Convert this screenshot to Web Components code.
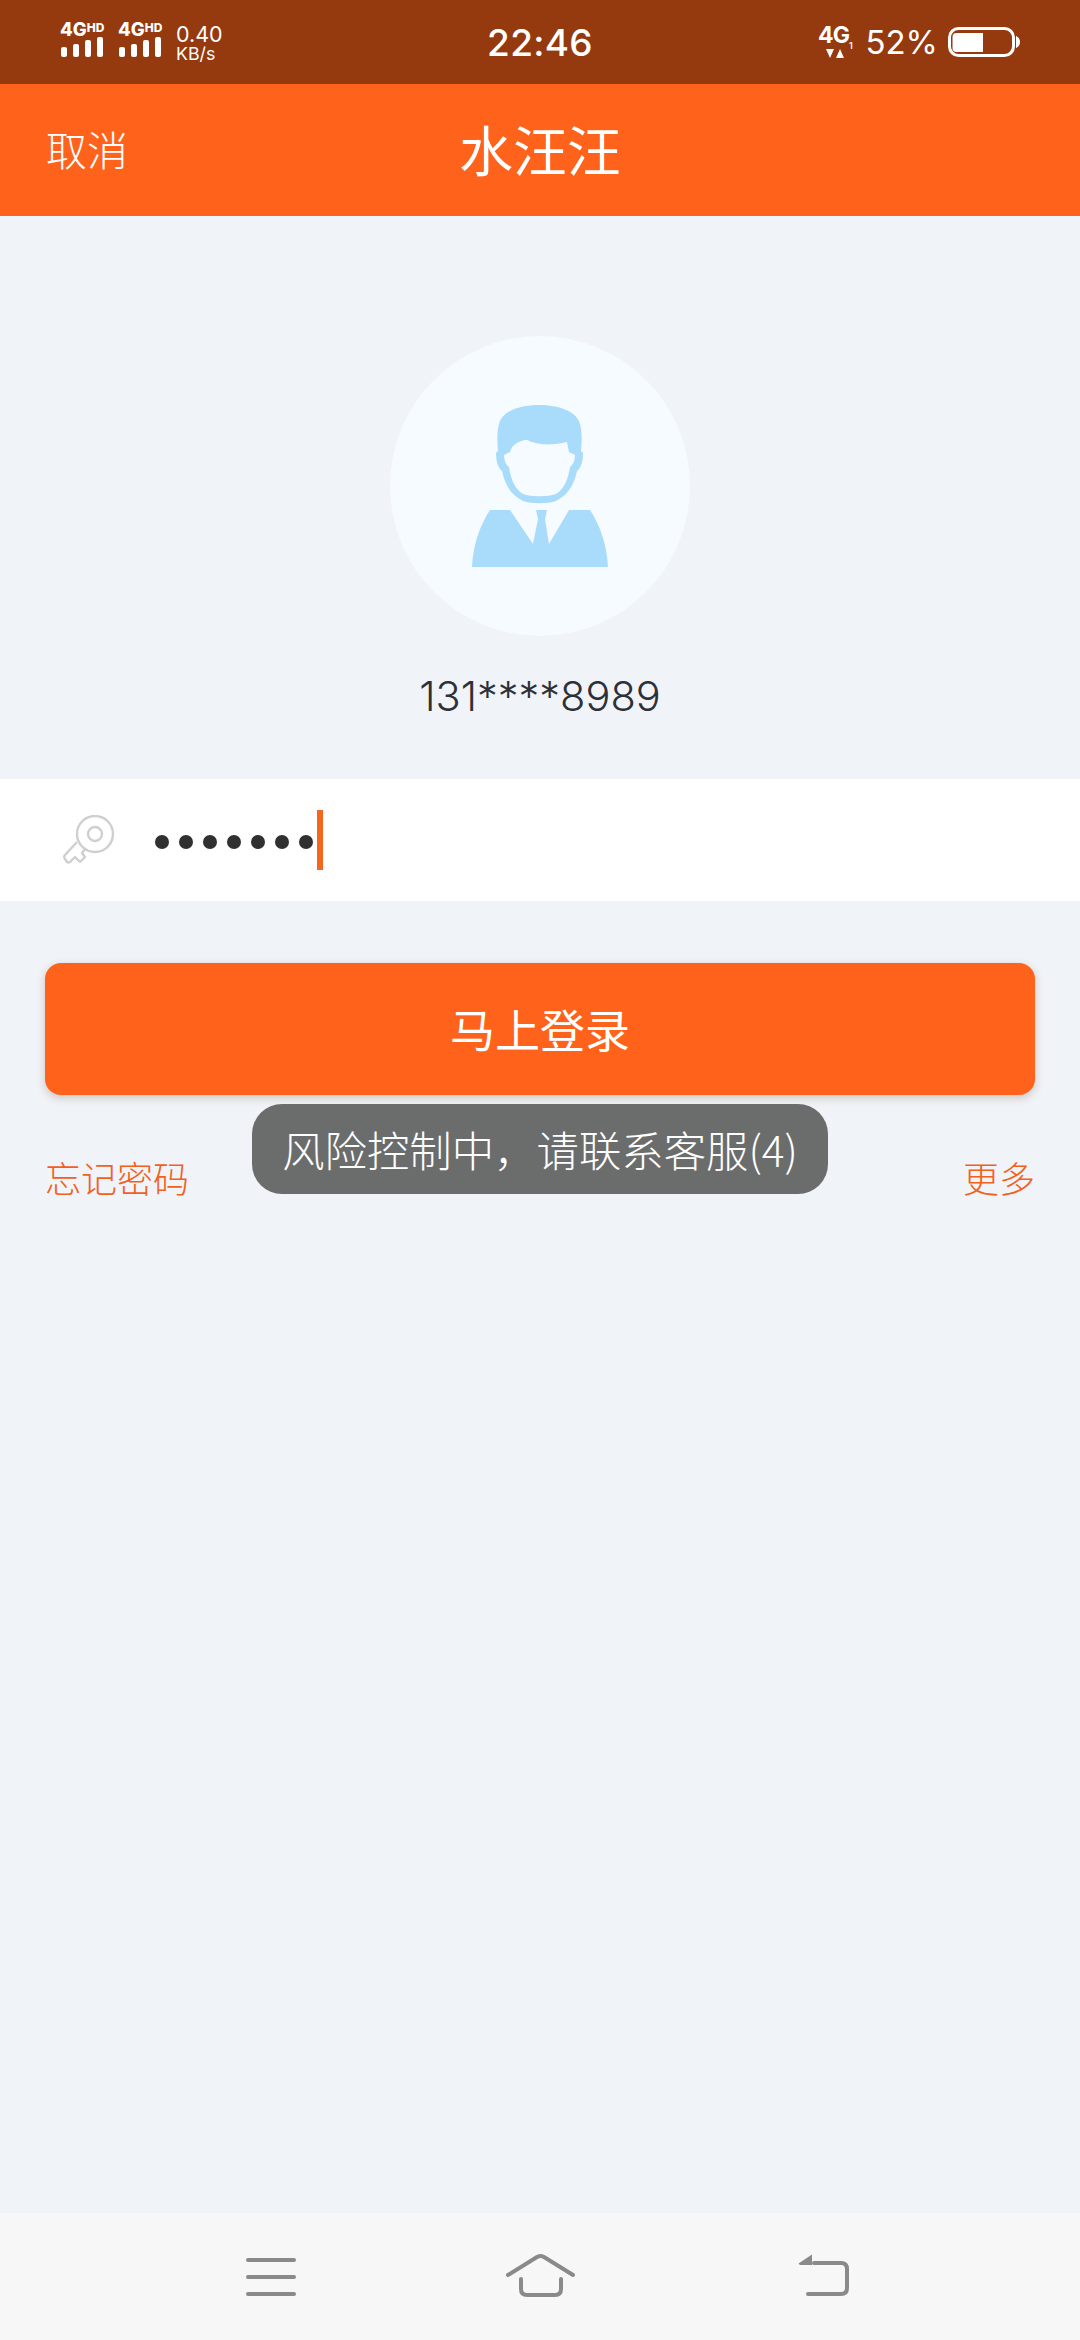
<!DOCTYPE html>
<html lang="zh">
<head>
<meta charset="utf-8">
<title>水汪汪</title>
<style>
    html, body{
        margin: 0;
        height: 2340px;
        overflow: hidden;
    }
    body{
        display: flex;
        flex-direction: column;
        position: relative;
        background: #f0f3f7;
        font-family: "Inter", "Noto Sans CJK SC", sans-serif;
    }
</style>
</head>
<body>
<status-bar></status-bar>
<app-bar heading="水汪汪" action="取消"></app-bar>
<user-avatar phone="131****8989"></user-avatar>
<password-field count="7"></password-field>
<login-button>马上登录</login-button>
<login-links left="忘记密码" right="更多"></login-links>
<toast-message>风险控制中，请联系客服(4)</toast-message>
<nav-bar></nav-bar>

<script>
class StatusBar extends HTMLElement{
    constructor(){
        super();
        this.shadow = this.attachShadow({mode: 'open'});
    }
    connectedCallback() {
        this.render();
    }
    signal(){
        return `
        <div class="signal">
            <div class="net"><b>4G</b><i>HD</i></div>
            <div class="bars"><span style="height:10px"></span><span style="height:13px"></span><span style="height:17px"></span><span style="height:20px"></span></div>
        </div>`;
    }
    render(){
        this.shadow.innerHTML =
        `
        <style>
            :host{
                display: block;
                height: 84px;
                background: #95390e;
                color: #fff;
                font-family: "Inter", sans-serif;
            }
            .row{
                display: grid;
                grid-template-columns: 1fr auto 1fr;
                align-items: center;
                height: 84px;
                padding: 0 60px;
            }
            .left, .right{
                display: flex;
                align-items: center;
            }
            .right{
                justify-content: flex-end;
            }
            .signal{
                width: 46px;
                margin-right: 12px;
                margin-top: -6px;
            }
            .net{
                display: flex;
                height: 16px;
                line-height: 16px;
                white-space: nowrap;
            }
            .net b{
                font-size: 18.5px;
                font-weight: 800;
                letter-spacing: 0;
            }
            .net i{
                font-size: 12px;
                font-weight: 800;
                font-style: normal;
                line-height: 11px;
                margin-top: 1px;
            }
            .bars{
                display: flex;
                align-items: flex-end;
                gap: 6px;
                height: 20px;
                margin-left: 1px;
            }
            .bars span{
                width: 6px;
                background: #fff;
                border-radius: 2px;
            }
            .speed{
                font-size: 21.5px;
                line-height: 22px;
                margin-top: 1px;
            }
            .speed small{
                display: block;
                font-size: 17.8px;
                line-height: 18px;
            }
            .time{
                font-size: 37px;
                font-weight: 450;
                letter-spacing: 0.3px;
            }
            .sim{
                display: flex;
                flex-direction: column;
                align-items: center;
                width: 36px;
                margin-right: 12px;
                margin-top: -2px;
            }
            .sim div{
                font-size: 23px;
                font-weight: 700;
                line-height: 22px;
                letter-spacing: -1px;
                white-space: nowrap;
            }
            .sim sub{
                font-size: 9px;
                font-weight: 600;
                line-height: 0;
                letter-spacing: 0;
            }
            .sim svg{
                display: block;
                margin-top: 3px;
            }
            .pct{
                font-size: 33px;
                margin-right: 10px;
            }
            .battery{
                display: block;
            }
        </style>
        <div class="row">
            <div class="left">
                ${this.signal()}
                ${this.signal()}
                <div class="speed">0.40<small>KB/s</small></div>
            </div>
            <div class="time">22:46</div>
            <div class="right">
                <div class="sim"><div>4G<sub>1</sub></div>
                    <svg width="18" height="9" viewBox="0 0 18 9"><path d="M0 0h8L4 9zM10 9h8l-4-9z" fill="#fff"/></svg>
                </div>
                <div class="pct">52%</div>
                <svg class="battery" width="72" height="30" viewBox="0 0 72 30">
                    <rect x="1.500" y="1.500" width="64" height="27" rx="9" fill="none" stroke="#fff" stroke-width="3"/>
                    <path d="M4.500 10a4 4 0 0 1 4-4H35V25H8.500a4 4 0 0 1-4-4z" fill="#fff"/>
                    <path d="M68 9c2.500 1 4 3 4 6s-1.500 5-4 6z" fill="#fff"/>
                </svg>
            </div>
        </div>
        `;
    }
}
customElements.define('status-bar', StatusBar);

class AppBar extends HTMLElement{
    constructor(){
        super();
        this.shadow = this.attachShadow({mode: 'open'});
    }
    connectedCallback() {
        this.render();
    }
    render(){
        this.shadow.innerHTML =
        `
        <style>
            :host{
                display: block;
                background: #ff631b;
                color: #fff;
                font-family: "Noto Sans CJK SC", sans-serif;
            }
            .bar{
                display: grid;
                grid-template-columns: 1fr auto 1fr;
                align-items: center;
                box-sizing: border-box;
                height: 132px;
                padding: 0 46px 4px;
            }
            .action{
                font-size: 41px;
                font-weight: 300;
            }
            h1{
                margin: 0;
                font-size: 54px;
                font-weight: 400;
            }
        </style>
        <div class="bar">
            <div class="action">${this.getAttribute('action')}</div>
            <h1>${this.getAttribute('heading')}</h1>
        </div>
        `;
    }
}
customElements.define('app-bar', AppBar);

class UserAvatar extends HTMLElement{
    constructor(){
        super();
        this.shadow = this.attachShadow({mode: 'open'});
    }
    connectedCallback() {
        this.render();
    }
    render(){
        this.shadow.innerHTML =
        `
        <style>
            :host{
                display: flex;
                flex-direction: column;
                align-items: center;
                padding-top: 120px;
                height: 563px;
                box-sizing: border-box;
            }
            .circle{
                display: flex;
                flex: none;
                align-items: center;
                justify-content: center;
                width: 300px;
                height: 300px;
                border-radius: 50%;
                background: #f6fbff;
            }
            svg{
                display: block;
            }
            .phone{
                margin-top: 36px;
                font-family: "Inter", sans-serif;
                font-size: 41.500px;
                font-weight: 300;
                line-height: 48px;
                color: #2e3038;
            }
        </style>
        <div class="circle">
            <svg width="136" height="162" viewBox="0 0 136 162">
                <path fill="#a9dcfa" d="M26 46C25 36 25 26 27 19C30 6 48 0 67 0C86 0 105 6 108 19C110 26 110 36 109 46L111 48C111 56 109 63 105 66C102 80 96 90 84 96C76 99 59 99 51 96C39 90 33 80 30 66C26 63 24 56 24 48Z"/>
                <path fill="#f6fbff" d="M40 42C45 37 50 35 55 35C65 40 80 41 95 37L97 47L103 50C103 55 101 60 98 62C96 75 92 84 84 89C76 92 59 92 51 89C43 84 39 75 37 62C34 60 32 55 32 50L38 47Z"/>
                <path fill="#a9dcfa" d="M0 162C1 140 8 120 18 105H38L61 139L66 114L64 105H75L73 114L77 139L97 105H118C128 120 135 140 136 162Z"/>
            </svg>
        </div>
        <div class="phone">${this.getAttribute('phone')}</div>
        `;
    }
}
customElements.define('user-avatar', UserAvatar);

class PasswordField extends HTMLElement{
    constructor(){
        super();
        this.shadow = this.attachShadow({mode: 'open'});
    }
    connectedCallback() {
        this.render();
    }
    render(){
        let dots = '';
        for(let i = 0; i < Number(this.getAttribute('count')); i++){
            dots += '<span></span>';
        }
        this.shadow.innerHTML =
        `
        <style>
            :host{
                display: flex;
                align-items: center;
                height: 122px;
                padding-left: 63px;
                background: #fff;
            }
            svg{
                display: block;
                width: 52px;
                height: 50px;
                margin-right: 40px;
            }
            .dots{
                display: flex;
                gap: 10px;
                margin-top: 4px;
            }
            .dots span{
                width: 14px;
                height: 14px;
                border-radius: 50%;
                background: #303030;
            }
            .caret{
                width: 6px;
                height: 60px;
                margin-left: 4px;
                background: #f4671f;
            }
        </style>
        <svg viewBox="0 0 52 50" fill="none" stroke="#cfcfcf" stroke-width="2.400" stroke-linejoin="round">
            <circle cx="32" cy="19" r="18"/>
            <circle cx="32" cy="19" r="7"/>
            <path d="M14 27L2 40Q0.500 42 2 44L4 47Q5 48 7 47L12 42L16 46Q17 47 18 46L22 42L19 38L23 33"/>
        </svg>
        <div class="dots">${dots}</div>
        <div class="caret"></div>
        `;
    }
}
customElements.define('password-field', PasswordField);

class LoginButton extends HTMLElement{
    constructor(){
        super();
        this.shadow = this.attachShadow({mode: 'open'});
    }
    connectedCallback() {
        this.render();
    }
    render(){
        this.shadow.innerHTML =
        `
        <style>
            :host{
                display: block;
                margin: 62px 45px 0;
            }
            button{
                display: block;
                width: 100%;
                height: 132px;
                padding: 0 0 2px;
                border: 0;
                border-radius: 16px;
                background: #ff631b;
                box-shadow: 0 3px 8px rgba(120, 80, 60, 0.28);
                color: #fff;
                font-family: "Noto Sans CJK SC", sans-serif;
                font-size: 45px;
                font-weight: 400;
            }
        </style>
        <button><slot></slot></button>
        `;
    }
}
customElements.define('login-button', LoginButton);

class LoginLinks extends HTMLElement{
    constructor(){
        super();
        this.shadow = this.attachShadow({mode: 'open'});
    }
    connectedCallback() {
        this.render();
    }
    render(){
        this.shadow.innerHTML =
        `
        <style>
            :host{
                display: flex;
                justify-content: space-between;
                margin: 57px 45px 0;
                color: #f2601c;
                font-family: "Noto Sans CJK SC", sans-serif;
                font-size: 36px;
                font-weight: 300;
                line-height: 50px;
            }
        </style>
        <span>${this.getAttribute('left')}</span>
        <span>${this.getAttribute('right')}</span>
        `;
    }
}
customElements.define('login-links', LoginLinks);

class ToastMessage extends HTMLElement{
    constructor(){
        super();
        this.shadow = this.attachShadow({mode: 'open'});
    }
    connectedCallback() {
        this.render();
    }
    render(){
        this.shadow.innerHTML =
        `
        <style>
            :host{
                position: absolute;
                left: 252px;
                top: 1104px;
                width: 576px;
                height: 90px;
                box-sizing: border-box;
                padding-bottom: 2px;
                display: flex;
                align-items: center;
                justify-content: center;
                border-radius: 30px;
                background: #6b6d6d;
                color: #fff;
                font-family: "Noto Sans CJK SC", sans-serif;
                font-size: 42.4px;
                font-weight: 300;
                white-space: nowrap;
            }
        </style>
        <slot></slot>
        `;
    }
}
customElements.define('toast-message', ToastMessage);

class NavBar extends HTMLElement{
    constructor(){
        super();
        this.shadow = this.attachShadow({mode: 'open'});
    }
    connectedCallback() {
        this.render();
    }
    render(){
        this.shadow.innerHTML =
        `
        <style>
            :host{
                display: flex;
                align-items: flex-start;
                margin-top: auto;
                height: 127px;
                padding-left: 246px;
                background: #f7f7f7;
            }
            svg{
                display: block;
                flex: none;
            }
            .menu{
                margin-top: 45px;
            }
            .home{
                margin: 41px 0 0 210px;
            }
            .back{
                margin: 41px 0 0 222px;
            }
        </style>
        <svg class="menu" width="50" height="38" viewBox="0 0 50 38" stroke="#8a8a8a" stroke-width="4" stroke-linecap="round" fill="none"><path d="M2 2H48M2 19H48M2 36H48"/></svg>
        <svg class="home" width="70" height="44" viewBox="0 0 70 44" stroke="#8a8a8a" stroke-width="4" stroke-linecap="round" stroke-linejoin="round" fill="none"><path d="M2 21L31 3Q34.500 1 38 3L67 21M15 25V35Q15 41 21 41H49Q55 41 55 35V25"/></svg>
        <svg class="back" width="52" height="44" viewBox="0 0 52 44" fill="none"><path d="M16 9H43Q49 9 49 15V34Q49 40 43 40H10" stroke="#8a8a8a" stroke-width="4" stroke-linecap="round"/><path d="M0.500 9.500L14 0.500V11H2Z" fill="#8a8a8a"/></svg>
        `;
    }
}
customElements.define('nav-bar', NavBar);
</script>
</body>
</html>
